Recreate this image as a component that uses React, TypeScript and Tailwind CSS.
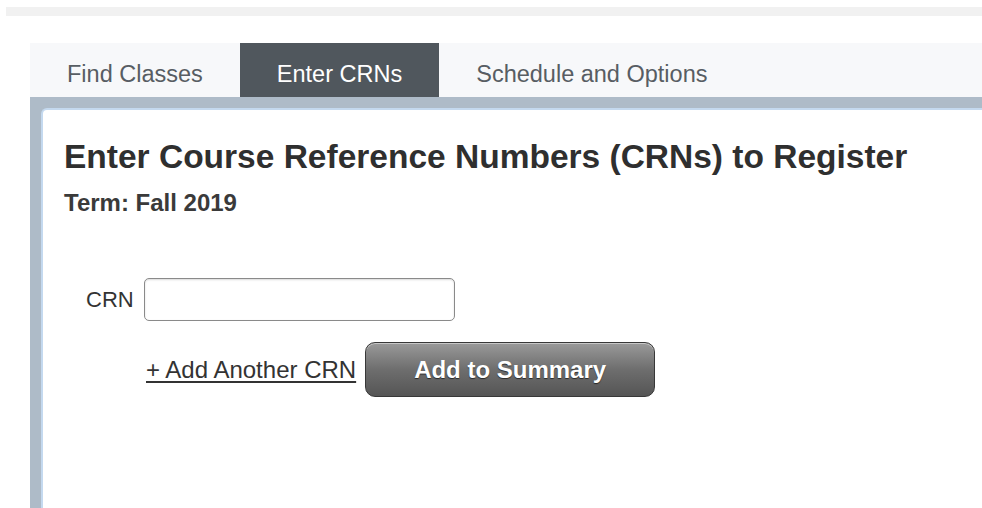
import { useState } from 'react';

const tabs = ['Find Classes', 'Enter CRNs', 'Schedule and Options'];

export default function App() {
  const [activeTab, setActiveTab] = useState('Enter CRNs');
  const [crn, setCrn] = useState('');

  return (
    <div
      className="w-[982px] h-[508px] overflow-hidden bg-white flex flex-col"
      style={{ fontFamily: '"Liberation Sans", Arial, sans-serif' }}
    >
      {/* Top strip */}
      <div className="mt-[7px] ml-[6px] h-[9px] bg-[#f1f1f1]" />

      <div className="mt-[27px] ml-[30px] flex-1 flex flex-col">
        {/* Tabs */}
        <div className="h-[54px] bg-[#f7f8fa] flex">
          {tabs.map((tab) => (
            <button
              key={tab}
              onClick={() => setActiveTab(tab)}
              className={`h-full px-[37px] pt-[9px] text-[23.5px] leading-none ${
                activeTab === tab
                  ? 'bg-[#50575d] text-white'
                  : 'text-[#575d63]'
              }`}
            >
              {tab}
            </button>
          ))}
        </div>

        {/* Panel frame */}
        <div className="flex-1 bg-[#aebbc8] pt-[11px] pl-[11px] flex">
          <div className="flex-1 bg-white border-t-2 border-l-2 border-[#c4d9ef] rounded-tl-[6px] pt-[30px] pl-[21px]">
            <h1 className="text-[33.5px] leading-[33px] font-bold text-[#2f2f2f] whitespace-nowrap">
              Enter Course Reference Numbers (CRNs) to Register
            </h1>
            <div className="mt-[18px] text-[24px] leading-[24px] font-bold text-[#3a3a3a]">
              Term: Fall 2019
            </div>

            {/* CRN entry form */}
            <div className="mt-[63px] flex items-center">
              <label className="ml-[22px] text-[22px] leading-none text-[#333333]">CRN</label>
              <input
                value={crn}
                onChange={(e) => setCrn(e.target.value)}
                className="ml-[10px] w-[311px] h-[43px] border border-[#8a8a8a] rounded-[5px] px-2 text-[20px] outline-none shadow-[inset_0_1px_2px_rgba(0,0,0,0.15)]"
              />
            </div>
            <div className="mt-[21px] flex items-center pl-[82px]">
              <a href="#" className="text-[24px] leading-none text-[#333333] underline underline-offset-[3px]">
                + Add Another CRN
              </a>
              <button className="ml-[9px] w-[290px] h-[55px] rounded-[10px] border border-[#383838] bg-gradient-to-b from-[#9a9a9a] via-[#6e6e6e] to-[#555555] shadow-[inset_0_1px_0_rgba(255,255,255,0.45)] text-white text-[24px] font-bold [text-shadow:0_1px_1px_rgba(0,0,0,0.6)]">
                Add to Summary
              </button>
            </div>
          </div>
        </div>
      </div>
    </div>
  );
}
